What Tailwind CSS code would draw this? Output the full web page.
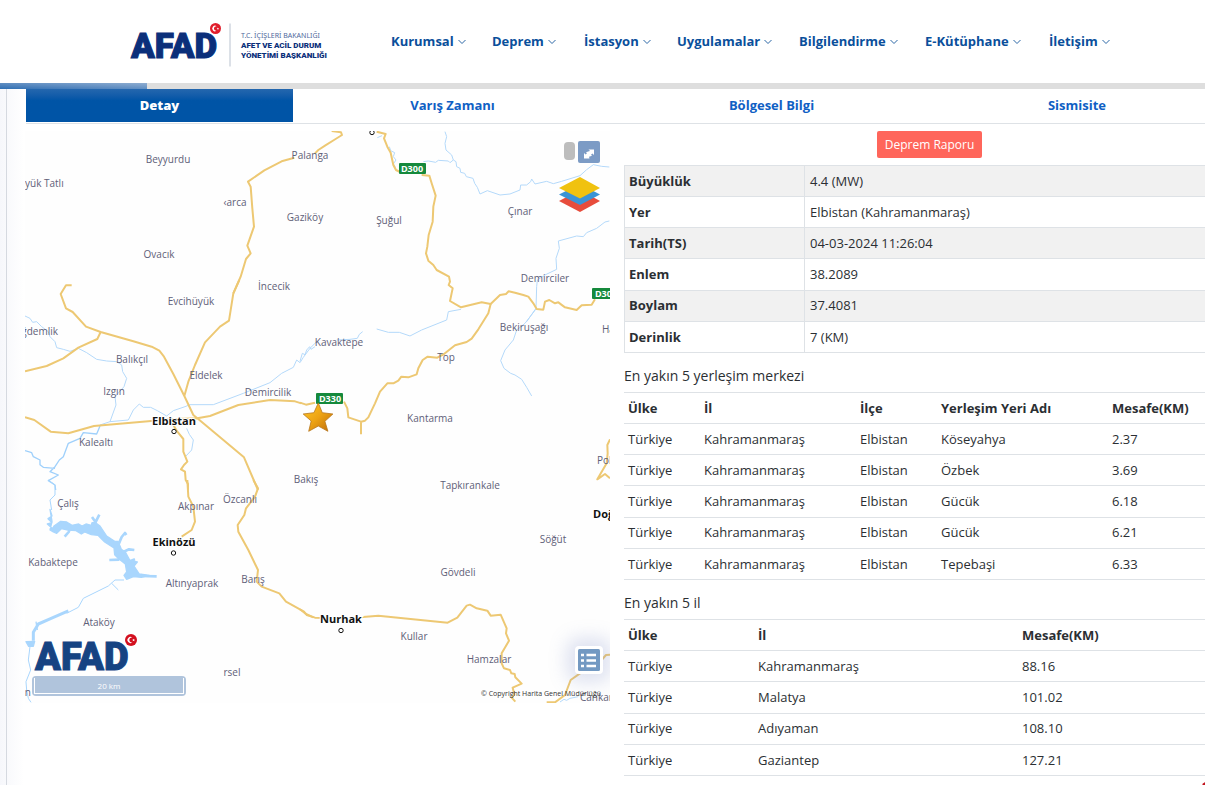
<!DOCTYPE html>
<html lang="tr">
<head>
<meta charset="utf-8">
<meta name="viewport" content="width=device-width, initial-scale=1">
<title>AFAD Deprem Detay</title>
<script src="https://cdn.jsdelivr.net/npm/@tailwindcss/browser@4"></script>
</head>
<body class="min-h-screen overflow-hidden bg-white font-['Open_Sans','Noto_Sans',sans-serif] text-sm text-[#2b2f33]">
<svg class="hidden" aria-hidden="true">
  <symbol id="flag" viewBox="0 0 12 12">
    <circle cx="6" cy="6" r="6"/>
    <path fill="#fff" d="M7.4 3.7A3 3 0 1 0 7.4 8.3 2.4 2.4 0 1 1 7.4 3.7ZM8.6 4.8l.4.8.9.1-.6.6.1.9-.8-.4-.8.4.1-.9-.6-.6.9-.1Z"/>
  </symbol>
  <symbol id="chev" viewBox="0 0 8 6"><path d="M.5 1 4 4.500 7.500 1" fill="none" stroke="#2a66a5"/></symbol>
</svg>

<header class="flex h-[83px] items-center pl-[130px]">
  <a href="#" class="flex w-[261px] shrink-0 items-center" aria-label="AFAD">
    <svg class="h-[50px] w-[200px]" viewBox="130 17 200 50">
      <text x="131" y="58" font-family="Roboto" font-weight="900" font-size="35" fill="#0b2f7a" stroke="#0b2f7a">AFAD</text>
      <use href="#flag" x="210" y="23" width="11" height="11" fill="#e01e2c"/>
      <path d="M230 23.500V66.500" stroke="#b9c2cf"/>
      <text x="241" y="38" font-family="Noto Sans" font-size="7" fill="#50699c">T.C. İÇİŞLERİ BAKANLIĞI</text>
      <text x="241" y="48" font-family="Roboto" font-weight="900" font-size="8" fill="#0b2f7a">AFET VE ACİL DURUM</text>
      <text x="241" y="58" font-family="Roboto" font-weight="900" font-size="8" fill="#0b2f7a">YÖNETİMİ BAŞKANLIĞI</text>
    </svg>
  </a>
  <nav class="grid grid-cols-[101px_92px_93px_122px_126px_124px_80px] text-[13px] font-bold text-[#0a4f9b]">
    <a href="#" class="flex items-center gap-1">Kurumsal<svg class="h-[6px] w-2"><use href="#chev"/></svg></a>
    <a href="#" class="flex items-center gap-1">Deprem<svg class="h-[6px] w-2"><use href="#chev"/></svg></a>
    <a href="#" class="flex items-center gap-1">İstasyon<svg class="h-[6px] w-2"><use href="#chev"/></svg></a>
    <a href="#" class="flex items-center gap-1">Uygulamalar<svg class="h-[6px] w-2"><use href="#chev"/></svg></a>
    <a href="#" class="flex items-center gap-1">Bilgilendirme<svg class="h-[6px] w-2"><use href="#chev"/></svg></a>
    <a href="#" class="flex items-center gap-1">E-Kütüphane<svg class="h-[6px] w-2"><use href="#chev"/></svg></a>
    <a href="#" class="flex items-center gap-1">İletişim<svg class="h-[6px] w-2"><use href="#chev"/></svg></a>
  </nav>
</header>
<div class="h-[6px] bg-[#dedede]"><div class="h-full w-[147px] bg-linear-to-tr from-[#2e6fb3] to-[#8fadd0]"></div></div>

<div class="flex min-h-[696px] bg-linear-to-r from-[#f6f7fb] to-white to-[2%]">
  <main class="ml-[6px] -mr-[18px] min-w-0 flex-1 border-l border-[#d5d9e0] pl-[18px]">
    <div role="tablist" class="ml-px grid h-[35px] grid-cols-[267fr_319fr_319fr_292fr] border-b border-[#dee2e6] pb-px text-[13px] font-bold text-[#0f60c4]">
      <button role="tab" class="bg-linear-to-b from-[#2467ae] to-[#0054a6] to-[35%] font-extrabold text-white">Detay</button>
      <button role="tab">Varış Zamanı</button>
      <button role="tab">Bölgesel Bilgi</button>
      <button role="tab">Sismisite</button>
    </div>

    <div class="grid grid-cols-[585fr_599fr] gap-[14px] pt-[7px]">
      <section class="relative h-[572px] overflow-hidden bg-[#fefefe]" aria-label="Harita">
        <svg class="h-full w-full" viewBox="25 131 585 572" preserveAspectRatio="xMinYMin slice">
          <defs>
            <linearGradient id="gold" x1="0" y1="0" x2="1" y2="1"><stop offset="0" stop-color="#ffc928"/><stop offset=".5" stop-color="#eda314"/><stop offset="1" stop-color="#bd6a0a"/></linearGradient>
          </defs>
          <!-- rivers -->
          <g fill="none" stroke="#b4d9fa" stroke-width="3" stroke-linejoin="round">
            <g transform="translate(300 120) scale(.33333)">
              <path d="M435 35l5 15-5 20 3 20 17 15 5 15-10 8-5-5-30-2-8 6-22-4-15 2M460 120l8 5 2 15 10 5 2 12 12 3 5 10 20 5 5 15 8 12 8 20 22-10 38 13 30-3 30-12 2-15 18 0 12-10 3-8 10 15 35-8 20 7 25-7 55-17 20-18 20-15 25 5 23 2"/>
              <path d="M268 80l4 12 12 6-4 12 8 10-8 12 6 10M232 53l14-6"/>
              <path d="M928 303l-13 3-25 19-30 13-10 12-20-2-55 15 3 22-10 30 2 33-35 17-23 15-2 20-2 65-28 40M483 568l-38 7-5 25-75 30"/>
            </g>
            <g transform="translate(300 300) scale(.33333)">
              <path d="M708 27l-33 43-25 20-10 30-25 30-13 32 10 23 20 15 13 5 20 13 15 24 15 26M365 90l-35 18-32-11H265l-35-10M188 95l-10 8-6 12-22 3-40 2M45 140l-12 8-4-8-9 10-5 14-8-4L0 184"/>
              <path d="M780 1206l12-8 8 3 10-6 25-5"/>
            </g>
            <g transform="translate(0 280) scale(.33333)">
              <path d="M75 108l15 7 8 12 12-2 15 15 20 15 5 15 15 15 5 18 20 5 20 6 25-9 25 13 30 20 30 5 30 2 15 10 3 20 12 20-8 25-27 30 3 25-18 50"/>
              <path d="M300 435l30-10 55-5 15-30 18-18 12 10 22 0 20 10 28 16 20-16 35-12 15-6h70l90-34 80-32 35-28 35-18 10-22 10 8 10-16 20-27 20-20"/>
              <path d="M560 445l8 18 12 17-5 30-17 18"/>
            </g>
            <g transform="translate(0 280) scale(.33333)" stroke="#9fd0fb" stroke-width="4">
              <path d="M300 438l-10 24-40-4-10 17-35 15-15 40-12 10-13 20-15 15 25 10-30 17 20 13 2 15M75 512l20 6 5 12 20 10 0 14 10 8 35 3"/>
            </g>
            <g transform="translate(0 480) scale(.33333)" stroke="#a9d6fd" stroke-width="4">
              <path d="M145 0l20 15v30l-15 15 5 30M372 300h-27l-20 18-75 37-15 27-35 18M335 310l20 20" stroke-width="3"/>
              <path d="M205 393l-55 24-35 15-15 25 0 25" stroke-width="9"/>
              <path d="M78 485l26-1-4 15-14 0ZM112 450l-4-25" fill="#a9d6fd"/>
              <path d="M90 500l-5 40 7 30-14 35 2 25 5 25 8 12" stroke-width="3"/>
              <path d="M150 88l6 20-12 8 12 12-14 4 16 14 4-8 20-14 18 2 16 10 20-4 10 6 12-6 16 4 2-8 10 0 14 10 20 30 24 16 10 0 10 24 12 8 14 26 22 4-10 12 16 24 30 4-24 6-24-2-20 8-8-12 8-10-4-24-20-16-12-12-2-20-28-18-20-20-20-2-20-8-10 6-16-10-24-2-20-4-14 14-10-4-10-6 6-26Z" fill="#a9d6fd"/>
              <path d="M290 150l-4-25-10-14M286 128l12-24M355 195l10-24 10-12 4 6M365 218l22-10 16 2M328 240l30-1M375 250l30-12M212 140l-6 16-12 14M425 288l45 1" stroke-width="8"/>
            </g>
          </g>
          <!-- roads -->
          <g fill="none" stroke="#edc873" stroke-width="6" stroke-linejoin="round">
            <g transform="translate(0 75) scale(.33333)"><path d="M883 248L845 259 793 286 744 320 752 335 757 400 762 455 742 512 752 535 738 552 722 605 700 655"/></g>
            <g transform="translate(300 120) scale(.33333)">
              <path d="M95 33l28 4 3 8-24 15-27 17-20 13-10 10M230 35l27 7-5 13 10 25 10 18 8 37 8 15 12 6M365 165l23 2 7 23 12 37-7 33-2 45-12 40-4 35-4 20 7 22 15 13 10 15 37 20 3 15-4 10 12 10-8 38 33 19 62-15 27 5 28-27 18-3 8-8 19 4 25 7 15 5 15 20 10 17 20 2 5-24 13-5 17 10 10-3 20 15 35 8 15-14 30-2 10-16"/>
            </g>
            <g transform="translate(300 300) scale(.33333)">
              <path d="M572 12L565 40 535 88 515 116 500 126 465 136 432 162 412 173 383 170 368 180 355 205 350 223 325 232 304 230 295 242 280 250 262 250 240 275 225 310 205 352 195 362 183 365 145 352 142 325 132 305M183 365V403M0 308L18 314 45 308M930 418L922 435 923 460 920 490 892 538 915 522 930 535"/>
            </g>
            <g transform="translate(0 280) scale(.33333)">
              <path d="M215 16H198L182 42 198 85 218 96 258 140 302 156 400 184 455 200 478 212 492 230 520 282 553 348 580 405 592 415 630 408 715 375 810 360 885 364 904 370M302 156L292 177 235 203 190 235 140 258 75 274M718 0L700 40 687 122 660 140 615 187 585 255 565 305 553 348M75 412L103 420 152 455 205 460 282 438 350 432 445 424 510 418 592 415 732 532 774 630M520 435L532 455 550 477V515L562 545 552 555 543 568 555 575 557 600 564 612V630"/>
            </g>
            <g transform="translate(0 480) scale(.33333)">
              <path d="M562 0L565 50 580 80 585 125 575 150 545 170M760 0L774 25 765 50 738 85 733 105 713 135 715 155 745 210 774 270 770 305 785 320 838 340 858 365 912 395 920 405 945 413 990 414"/>
            </g>
            <g transform="translate(300 490) scale(.33333)">
              <path d="M0 358l15 12 25 12M180 382l55-5 208 21 29-15 28-36 10-3 20 11 32 7 10 15 30-3 18 41-2 15 9 22-22 38v30l7 15 18 5 4 10 10 2 2 10 19 19-27 12 5 20-8 10 11 12M740 637h25l30-22 17-45 28-20 65-40 13-15 14-1"/>
            </g>
          </g>
          <!-- settlement names -->
          <g font-family="Open Sans" font-size="10" fill="#5f6078" text-anchor="middle">
            <text x="168" y="163">Beyyurdu</text><text x="310" y="159">Palanga</text>
            <text x="25" y="187" text-anchor="start">yük Tatlı</text><text x="235" y="206">‹arca</text>
            <text x="305" y="221">Gaziköy</text><text x="389" y="224">Şuğul</text><text x="520" y="215">Çınar</text>
            <text x="159" y="258">Ovacık</text><text x="274" y="290">İncecik</text><text x="545" y="282">Demirciler</text>
            <text x="191" y="305">Evcihüyük</text><text x="58" y="335" text-anchor="end">ğdemlik</text>
            <text x="524" y="331">Bekiruşağı</text><text x="602" y="333" text-anchor="start">Hacı</text>
            <text x="339" y="346">Kavaktepe</text><text x="446" y="361">Top</text><text x="132" y="363">Balıkçıl</text>
            <text x="206" y="379">Eldelek</text><text x="114" y="395">Izgın</text><text x="268" y="396">Demircilik</text>
            <text x="430" y="422">Kantarma</text><text x="96" y="446">Kalealtı</text><text x="597" y="464" text-anchor="start">Polat</text>
            <text x="306" y="483">Bakış</text><text x="470" y="489">Tapkırankale</text><text x="68" y="507">Çalış</text>
            <text x="196" y="510">Akpınar</text><text x="240" y="503">Özcanlı</text><text x="553" y="543">Söğüt</text>
            <text x="53" y="566">Kabaktepe</text><text x="192" y="587">Altınyaprak</text><text x="253" y="583">Barış</text>
            <text x="458" y="576">Gövdeli</text><text x="99" y="626">Ataköy</text><text x="414" y="640">Kullar</text>
            <text x="489" y="663">Hamzalar</text><text x="232" y="676">rsel</text><text x="31" y="696" text-anchor="end">en</text>
            <text x="580" y="701" text-anchor="start">Cankara</text>
          </g>
          <g font-family="Open Sans" font-size="11" font-weight="700" fill="#111" stroke="#fff" stroke-width="2" paint-order="stroke" text-anchor="middle">
            <text x="174" y="425">Elbistan</text><text x="174" y="546">Ekinözü</text><text x="341" y="623">Nurhak</text>
            <text x="593" y="518" text-anchor="start">Doğan</text>
          </g>
          <g fill="#fff" stroke="#111">
            <circle cx="174" cy="431.500" r="2.200"/><circle cx="173.500" cy="553" r="2.200"/><circle cx="341" cy="630.500" r="2.200"/><circle cx="372" cy="132.500" r="2.200"/>
          </g>
          <g fill="#15893c">
            <rect x="399" y="163" width="27" height="11" rx="1"/><rect x="592" y="288" width="27" height="11" rx="1"/><rect x="316" y="393" width="27" height="11" rx="1"/>
          </g>
          <g font-family="Open Sans" font-size="9" font-weight="700" fill="#fff" text-anchor="middle">
            <text x="412" y="172">D300</text><text x="606" y="297">D300</text><text x="330" y="402">D330</text>
          </g>
          <path d="M318.300 403l4 9.700 10.600 1.300-8 7.300 3 10-9.600-5.300-9.600 5.300 2.500-10.300-8-7 10.700-1.300Z" fill="url(#gold)" stroke="#b8761a" stroke-width=".8" stroke-linejoin="round"/>
          <g>
            <text x="35" y="670" font-family="Roboto" font-weight="900" font-size="38" fill="#164382" stroke="#164382">AFAD</text>
            <use href="#flag" x="125" y="634" width="12" height="12" fill="#d3101f"/>
          </g>
        </svg>

        <div class="absolute right-[10px] top-[10px] flex items-start gap-[3px]">
          <span class="mt-px h-[18px] w-[11px] rounded bg-[#bdbdbd]"></span>
          <button aria-label="Tam ekran" class="flex size-[22px] items-center justify-center rounded-xs bg-[#7c9bc5]">
            <svg class="mt-1 size-3" viewBox="0 0 12 12"><path d="M5.500 1.500H11V7L9.400 5.400 8 6.800 9 7.800 6 8.800 6.500 10.500H1V5l1.600 1.600L4 5.200 3 4.200 6 3.200 7.100 3.100Z" fill="#fff"/></svg>
          </button>
        </div>
        <button aria-label="Katmanlar" class="absolute right-[10px] top-[45px]">
          <svg class="h-[37px] w-[41px]" viewBox="0 0 41 37">
            <path d="M0 25 21 14 41 25 21 36Z" fill="#e74c3c"/><path d="M0 18.500 21 8 41 18.500 21 29Z" fill="#3a94d6"/><path d="M0 12 21 1 41 12 21 22.500Z" fill="#f0c20f"/>
          </svg>
        </button>
        <button aria-label="Lejant" class="absolute bottom-[29px] right-[7px] rounded-sm bg-white p-[3px] shadow-[0_0_18px_8px_rgba(125,140,200,0.25)]">
          <svg class="size-[22px]" viewBox="0 0 22 22"><rect width="22" height="22" rx="1.500" fill="#7399c2"/><path d="M3 6h3M3 11.500h3M3 17h3M8.500 6H18M8.500 11.500H18M8.500 17H18" stroke="#fff" stroke-width="2.400"/></svg>
        </button>
        <div class="absolute bottom-[7px] left-[7px] w-[154px] rounded bg-[#b0c4dc] p-[2px] text-center text-[8px] leading-[15px] text-white"><div class="border border-t-0 border-white">20 km</div></div>
        <p class="absolute bottom-[4px] right-[9px] text-[7px] leading-[10px] text-[#333]">© Copyright Harita Genel Müdürlüğü</p>
      </section>

      <section>
        <div class="flex justify-center pl-3">
          <button class="h-[27px] w-[105px] rounded-xs bg-[#ff665b] text-xs text-white">Deprem Raporu</button>
        </div>
        <table class="mt-[7px] h-[188px] w-full table-fixed border-collapse border border-[#dee2e6] text-left text-[13px]">
          <colgroup><col class="w-[180px]"><col></colgroup>
          <tbody class="[&_td]:pl-[5px] [&_th]:border-r [&_th]:border-[#dee2e6] [&_th]:pl-1 [&_tr]:border-b [&_tr]:border-[#dee2e6] [&_tr:nth-child(odd)]:bg-[#f1f1f1]">
            <tr><th>Büyüklük</th><td>4.4 (MW)</td></tr>
            <tr><th>Yer</th><td>Elbistan (Kahramanmaraş)</td></tr>
            <tr><th>Tarih(TS)</th><td>04-03-2024 11:26:04</td></tr>
            <tr><th>Enlem</th><td>38.2089</td></tr>
            <tr><th>Boylam</th><td>37.4081</td></tr>
            <tr><th>Derinlik</th><td>7 (KM)</td></tr>
          </tbody>
        </table>
        <h2 class="mb-[6px] mt-[13px] text-sm leading-5">En yakın 5 yerleşim merkezi</h2>
        <table class="h-[188px] w-full table-fixed border-collapse border-t border-[#dee2e6] text-left text-[13px] [&_td]:pl-1 [&_th]:pl-1 [&_tr]:border-b [&_tr]:border-[#dee2e6]">
          <colgroup><col class="w-[76px]"><col class="w-[156px]"><col class="w-[81px]"><col class="w-[171px]"><col></colgroup>
          <thead><tr class="h-[31px]"><th>Ülke</th><th>İl</th><th>İlçe</th><th>Yerleşim Yeri Adı</th><th>Mesafe(KM)</th></tr></thead>
          <tbody>
            <tr><td>Türkiye</td><td>Kahramanmaraş</td><td>Elbistan</td><td>Köseyahya</td><td>2.37</td></tr>
            <tr><td>Türkiye</td><td>Kahramanmaraş</td><td>Elbistan</td><td>Özbek</td><td>3.69</td></tr>
            <tr><td>Türkiye</td><td>Kahramanmaraş</td><td>Elbistan</td><td>Gücük</td><td>6.18</td></tr>
            <tr><td>Türkiye</td><td>Kahramanmaraş</td><td>Elbistan</td><td>Gücük</td><td>6.21</td></tr>
            <tr><td>Türkiye</td><td>Kahramanmaraş</td><td>Elbistan</td><td>Tepebaşi</td><td>6.33</td></tr>
          </tbody>
        </table>
        <h2 class="mb-[6px] mt-[13px] text-sm leading-5">En yakın 5 il</h2>
        <table class="h-[157px] w-full table-fixed border-collapse border-t border-[#dee2e6] text-left text-[13px] [&_td]:pl-1 [&_th]:pl-1 [&_tr]:border-b [&_tr]:border-[#dee2e6]">
          <colgroup><col class="w-[130px]"><col class="w-[264px]"><col></colgroup>
          <thead><tr class="h-[31px]"><th>Ülke</th><th>İl</th><th>Mesafe(KM)</th></tr></thead>
          <tbody>
            <tr><td>Türkiye</td><td>Kahramanmaraş</td><td>88.16</td></tr>
            <tr><td>Türkiye</td><td>Malatya</td><td>101.02</td></tr>
            <tr><td>Türkiye</td><td>Adıyaman</td><td>108.10</td></tr>
            <tr><td>Türkiye</td><td>Gaziantep</td><td>127.21</td></tr>
          </tbody>
        </table>
      </section>
    </div>
  </main>
</div>
<span class="fixed -bottom-[12px] -right-[12px] size-[16px] rounded-full bg-[#c1121c]"></span>
</body>
</html>
